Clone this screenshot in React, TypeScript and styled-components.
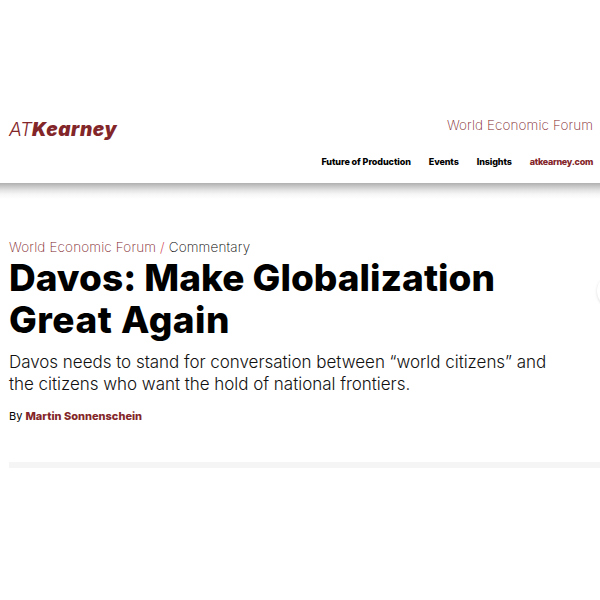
import React from 'react';
import styled, { createGlobalStyle } from 'styled-components';

const Global = createGlobalStyle`
  * { box-sizing: border-box; }
  html, body { margin: 0; background: #fff; overflow: hidden; }
  body { font-family: Inter, sans-serif; color: #000; }
`;
const Page = styled.div`
  position: relative;
  width: 600px;
  height: 600px;
  overflow: hidden;
  padding-top: 100px;
`;
const Header = styled.header`
  height: 83px;
  display: flex;
  justify-content: space-between;
  padding: 14px 7px 0 9px;
`;
const HeaderShadow = styled.div`
  height: 16px;
  background: linear-gradient(#b0b0b0, #c6c6c6 19%, #e2e2e2 44%, #f6f6f6 70%, #fff);
`;
const Logo = styled.a`
  display: flex;
  align-items: baseline;
  height: 30px;
  margin-top: 1px;
  font-size: 19px;
  line-height: 30px;
  font-style: italic;
  color: #832629;
`;
const LogoThin = styled.span`
  font-weight: 300;
  letter-spacing: -0.2px;
`;
const LogoBold = styled.span`
  font-weight: 900;
  letter-spacing: 0.6px;
`;
const Side = styled.div`
  display: flex;
  flex-direction: column;
  align-items: flex-end;
`;
const SiteName = styled.div`
  font-size: 13.5px;
  line-height: 22px;
  font-weight: 200;
  letter-spacing: 0.1px;
  color: #7d1b1f;
`;
const Nav = styled.nav`
  display: flex;
  gap: 18px;
  margin-top: 18px;
  line-height: 16px;
`;
const NavLink = styled.a<{ $accent?: boolean }>`
  font-size: 9px;
  font-weight: 800;
  letter-spacing: ${(p) => (p.$accent ? '-0.3px' : '-0.12px')};
  white-space: nowrap;
  color: ${(p) => (p.$accent ? '#832629' : '#000')};

  &:first-child { letter-spacing: -0.08px; }
`;
const Article = styled.main`
  padding: 38px 0 0 9px;
`;
const Crumb = styled.div`
  font-size: 13.5px;
  line-height: 20px;
  font-weight: 200;
  letter-spacing: 0.15px;
`;
const Accent = styled.span`
  color: #7d1b1f;
`;
const Slash = styled.span`
  color: #c8102e;
`;
const Title = styled.h1`
  margin: 0;
  font-size: 37px;
  line-height: 42px;
  font-weight: 800;
  white-space: nowrap;
`;
const TitleLine = styled.span<{ $spacing: number }>`
  display: block;
  letter-spacing: ${(p) => p.$spacing}px;
`;
const Lead = styled.p`
  margin: 10px 0 0;
  font-size: 17px;
  line-height: 22px;
  font-weight: 300;
  letter-spacing: -0.03px;
  color: #111;
  white-space: nowrap;
`;
const Byline = styled.div`
  margin-top: 13px;
  font-size: 11px;
  line-height: 16px;
`;
const Author = styled.a`
  font-weight: 800;
  color: #832629;
`;
const Rule = styled.div`
  height: 6px;
  margin-top: 38px;
  background: #f5f5f5;
`;
const EdgeButton = styled.button`
  position: absolute;
  left: 597px;
  top: 274px;
  width: 34px;
  height: 34px;
  border: 0;
  border-radius: 50%;
  background: #fff;
  box-shadow: 0 1px 3px rgba(0, 0, 0, 0.14);
`;

export default function App() {
  return (
    <Page>
      <Global />
      <Header>
        <Logo><LogoThin>AT</LogoThin><LogoBold>Kearney</LogoBold></Logo>
        <Side>
          <SiteName>World Economic Forum</SiteName>
          <Nav>
            <NavLink>Future of Production</NavLink>
            <NavLink>Events</NavLink>
            <NavLink>Insights</NavLink>
            <NavLink $accent>atkearney.com</NavLink>
          </Nav>
        </Side>
      </Header>
      <HeaderShadow />
      <Article>
        <Crumb><Accent>World Economic Forum</Accent> <Slash>/</Slash> Commentary</Crumb>
        <Title>
          <TitleLine $spacing={0.02}>Davos: Make Globalization</TitleLine>
          <TitleLine $spacing={0.5}>Great Again</TitleLine>
        </Title>
        <Lead>Davos needs to stand for conversation between “world citizens” and<br />the citizens who want the hold of national frontiers.</Lead>
        <Byline>By <Author>Martin Sonnenschein</Author></Byline>
        <Rule />
      </Article>
      <EdgeButton aria-label="Next" />
    </Page>
  );
}
